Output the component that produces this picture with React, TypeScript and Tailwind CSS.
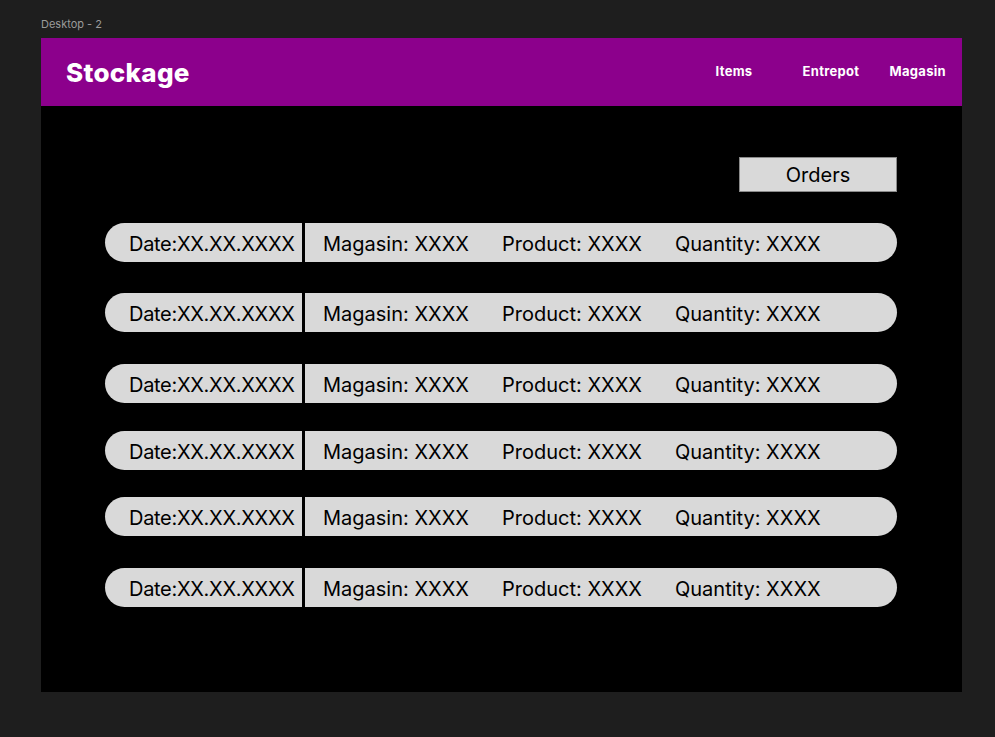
const rows = [
  { mt: 'mt-[31px]' },
  { mt: 'mt-[31px]' },
  { mt: 'mt-[32px]' },
  { mt: 'mt-[28px]' },
  { mt: 'mt-[27px]' },
  { mt: 'mt-[32px]' },
]

function OrderRow({ mt }: { mt: string }) {
  return (
    <div
      className={`${mt} flex h-[39px] w-[792px] items-stretch rounded-full bg-[#d9d9d9] text-[20px] text-black`}
    >
      <span className="flex w-[197px] shrink-0 items-center pl-[24px] pt-[2px] tracking-[-0.3px] whitespace-nowrap">
        Date:XX.XX.XXXX
      </span>
      <span className="w-[3px] shrink-0 bg-black" />
      <span className="flex w-[197px] shrink-0 items-center pl-[18px] pt-[2px] whitespace-nowrap">Magasin: XXXX</span>
      <span className="flex w-[173px] shrink-0 items-center pt-[2px] whitespace-nowrap">Product: XXXX</span>
      <span className="flex items-center pt-[2px] whitespace-nowrap">Quantity: XXXX</span>
    </div>
  )
}

export default function App() {
  return (
    <div
      className="min-h-[737px] w-[995px] bg-[#1e1e1e] pl-[41px] pt-[16px]"
      style={{ fontFamily: 'Inter, "Noto Sans", sans-serif' }}
    >
      <div className="h-[22px] text-[11px] leading-[16px] text-[#9b9b9b]">Desktop - 2</div>
      <div className="flex h-[654px] w-[921px] flex-col bg-black">
        <header className="flex h-[68px] shrink-0 items-center justify-between bg-[#8c008c] pl-[25px] pr-[16px] text-white">
          <h1 className="text-[26px] font-extrabold tracking-[0.3px]">Stockage</h1>
          <nav className="flex items-center text-[13px] font-bold tracking-[0.3px]">
            <a className="w-[87px]">Items</a>
            <a className="w-[87px]">Entrepot</a>
            <a>Magasin</a>
          </nav>
        </header>
        <div className="flex flex-col items-start pl-[64px]">
          <div className="mt-[51px] ml-[634px] flex h-[35px] w-[158px] items-center justify-center border border-[#8a8a8a] bg-[#d9d9d9] pt-[1px] text-[20px] text-black">
            Orders
          </div>
          {rows.map((r, i) => (
            <OrderRow key={i} mt={r.mt} />
          ))}
        </div>
      </div>
    </div>
  )
}
